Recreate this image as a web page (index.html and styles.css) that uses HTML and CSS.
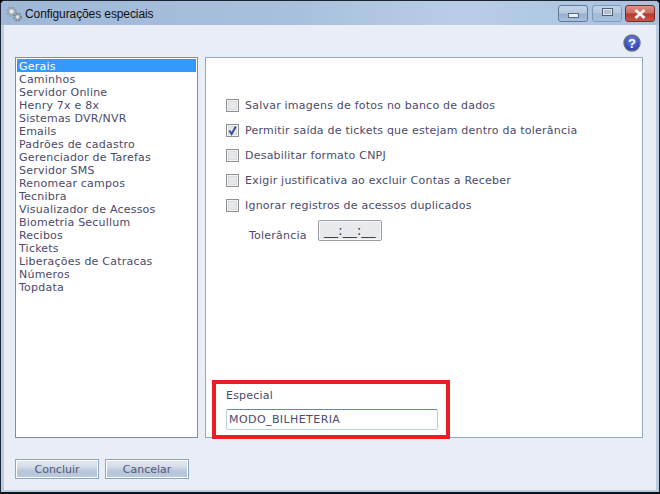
FILE: index.html
```html
<!DOCTYPE html>
<html lang="pt">
<head>
<meta charset="utf-8">
<title>Configurações especiais</title>
<link rel="stylesheet" href="styles.css">
</head>
<body>
<div class="window">
  <header class="titlebar">
    <svg class="app-icon" width="18" height="18" viewBox="0 0 18 18">
      <circle cx="6.5" cy="6.5" r="4" fill="none" stroke="#9a9ea6" stroke-width="2.4" stroke-dasharray="2 1.1"/>
      <circle cx="6.5" cy="6.5" r="2" fill="#e6e9ed"/>
      <circle cx="12.5" cy="12" r="3.4" fill="none" stroke="#80858e" stroke-width="2.2" stroke-dasharray="1.8 1"/>
      <circle cx="12.5" cy="12" r="1.4" fill="#e4e7eb"/>
    </svg>
    <span class="title">Configurações especiais</span>
    <div class="controls">
      <div class="ctl ctl-min"><span class="min-glyph"></span></div>
      <div class="ctl ctl-max"><span class="max-glyph"></span></div>
      <div class="ctl ctl-close">
        <svg width="20" height="12" viewBox="0 0 20 12"><path d="M5.5 2 L14.5 10 M14.5 2 L5.5 10" stroke="#eef0f2" stroke-width="3"/></svg>
      </div>
    </div>
  </header>
  <div class="content">
    <div class="help-row">
      <svg width="18" height="18" viewBox="0 0 18 18">
        <defs><radialGradient id="hb" cx="50%" cy="35%" r="70%"><stop offset="0" stop-color="#6f8cf0"/><stop offset="1" stop-color="#1c2fa8"/></radialGradient></defs>
        <circle cx="9" cy="9" r="8" fill="url(#hb)" stroke="#6b6f7c" stroke-width="1.4"/>
        <text x="9" y="13.5" class="help-q" text-anchor="middle">?</text>
      </svg>
    </div>
    <div class="main">
      <ul class="list">
        <li class="selected">Gerais</li>
        <li>Caminhos</li>
        <li>Servidor Online</li>
        <li>Henry 7x e 8x</li>
        <li>Sistemas DVR/NVR</li>
        <li>Emails</li>
        <li>Padrões de cadastro</li>
        <li>Gerenciador de Tarefas</li>
        <li>Servidor SMS</li>
        <li>Renomear campos</li>
        <li>Tecnibra</li>
        <li>Visualizador de Acessos</li>
        <li>Biometria Secullum</li>
        <li>Recibos</li>
        <li>Tickets</li>
        <li>Liberações de Catracas</li>
        <li>Números</li>
        <li>Topdata</li>
      </ul>
      <section class="panel">
        <div class="options">
          <div class="opt"><span class="check"></span>Salvar imagens de fotos no banco de dados</div>
          <div class="opt"><span class="check"><svg width="11" height="11" viewBox="0 0 11 11"><path d="M2.5 5.5 L4.6 9 L8.8 1.5" fill="none" stroke="#3c4fa0" stroke-width="2"/></svg></span>Permitir saída de tickets que estejam dentro da tolerância</div>
          <div class="opt"><span class="check"></span>Desabilitar formato CNPJ</div>
          <div class="opt"><span class="check"></span>Exigir justificativa ao excluir Contas a Receber</div>
          <div class="opt"><span class="check"></span>Ignorar registros de acessos duplicados</div>
        </div>
        <div class="tolerance">
          <span class="tolerance-label">Tolerância</span>
          <div class="time-field">__:__:__</div>
        </div>
        <div class="special">
          <label class="special-label">Especial</label>
          <div class="special-input">MODO_BILHETERIA</div>
        </div>
        <div class="highlight"></div>
      </section>
    </div>
    <footer class="actions">
      <button class="btn">Concluir</button>
      <button class="btn">Cancelar</button>
    </footer>
  </div>
</div>
</body>
</html>
```
FILE: styles.css
```css
* { box-sizing: border-box; }
html, body { margin: 0; padding: 0; background: #000; }
body { width: 660px; height: 494px; overflow: hidden; }
.window {
  width: 660px; height: 494px;
  display: flex; flex-direction: column;
  border: 1px solid #1c2430;
  border-right-color: #222; border-bottom: 2px solid #111;
  border-radius: 5px 5px 0 0;
  background: #b9cde4;
  font-family: "DejaVu Sans", Verdana, sans-serif;
  font-size: 11px;
  letter-spacing: 0.22px;
  color: #4a4a6a;
}
.titlebar {
  height: 24px; flex: none;
  display: flex; align-items: center;
  padding-left: 4px;
  background: linear-gradient(90deg, #9fb8d8 0%, #a9c0dc 45%, #b9cee6 70%, #a7c0de 100%);
  border-radius: 4px 4px 0 0;
}
.app-icon { flex: none; margin-top: 1px; }
.title {
  margin: 1px 0 0 2px;
  font-family: "Liberation Sans", Arial, sans-serif;
  font-size: 12px; color: #111;
  letter-spacing: -0.1px;
}
.controls { margin-left: auto; margin-right: 4px; display: flex; gap: 3px; align-self: flex-start; margin-top: 4px; }
.ctl {
  width: 30px; height: 17px; display: flex; align-items: center; justify-content: center;
  border: 1px solid #5f7a99; border-radius: 3px;
  background: linear-gradient(#c4d5e8 0%, #b3c8df 48%, #94afcc 52%, #a9c2dc 100%);
}
.ctl-min { margin-right: 1px; }
.ctl-max { border-color: #7f9ab8; background: linear-gradient(#c0d2e6 0%, #b2c7de 48%, #a0b9d3 52%, #aac2db 100%); }
.ctl-close { border-color: #7c2a22; background: linear-gradient(#dd9288 0%, #cd6a5e 48%, #b23a2c 52%, #c4574a 100%); }
.min-glyph { width: 11px; height: 5px; margin-top: 3px; background: #eef1f4; border: 1px solid #5a6a80; }
.max-glyph { width: 11px; height: 8px; margin-top: -3px; background: #b0c0d2; border: 1px solid #4f5f75; display: block; box-shadow: inset 0 0 0 1px #dfe4ea; }
.content {
  flex: 1; display: flex; flex-direction: column;
  margin: 0 3px 2px 3px;
  background: #e9eef6;
  padding: 0 13px 0 11px;
}
.help-row { height: 32px; display: flex; justify-content: flex-end; align-items: flex-end; padding-bottom: 5px; margin-right: 2px; }
.help-q { font-family: "Liberation Sans", Arial, sans-serif; font-weight: bold; font-size: 13px; fill: #fff; }
.main { display: flex; gap: 7px; height: 381px; flex: none; }
.list {
  width: 183px; margin: 0; padding: 1px;
  list-style: none;
  background: #fff;
  border: 1px solid #858c99;
}
.list li { height: 13px; line-height: 15px; padding-left: 2px; color: #4a4a6a; }
.list li.selected { background: #3399ff; color: #fff; }
.panel {
  position: relative;
  flex: 1;
  background: #fff;
  border: 1px solid #92a7c0;
  padding: 41px 0 0 20px;
  display: flex; flex-direction: column;
}
.options { display: flex; flex-direction: column; gap: 12px; }
.opt { height: 13px; line-height: 13px; display: flex; align-items: center; gap: 6px; white-space: nowrap; }
.check {
  width: 13px; height: 13px; flex: none;
  border: 1px solid #8e8f8f;
  background: #e6e8ec;
  box-shadow: inset 0 0 0 1px #f4f4f4, inset 0 0 0 2px #d8dbe0;
  display: flex; align-items: center; justify-content: center;
}
.tolerance { display: flex; align-items: flex-start; gap: 11px; margin: 8px 0 0 23px; }
.tolerance-label { margin-top: 9px; line-height: 13px; }
.time-field {
  width: 64px; height: 21px; line-height: 18px; text-align: center;
  background: #e7e9ec; border: 1px solid #9a9fa6; border-radius: 2px;
  box-shadow: inset 0 0 0 1px #f6f7f8;
  color: #444;
  font-size: 14px;
  letter-spacing: 0;
}
.special { margin-top: auto; padding: 0 0 7px 0; display: flex; flex-direction: column; gap: 7px; }
.special-label { line-height: 13px; }
.special-input {
  width: 212px; height: 21px; line-height: 19px; padding-left: 2px;
  background: #fff;
  border: 1px solid #b7cfe2; border-top-color: #5f88ad; border-radius: 2px;
  color: #4a4a72;
  letter-spacing: 0.42px;
}
.highlight {
  position: absolute; left: 6px; bottom: -2px;
  width: 238px; height: 59px;
  border: 4px solid #ee1c25;
}
.actions { display: flex; gap: 6px; margin-top: 21px; }
.btn {
  width: 84px; height: 20px; padding: 0;
  font: 11px "DejaVu Sans", Verdana, sans-serif;
  color: #55597a;
  border: 1px solid #8aa6c6;
  box-shadow: inset 0 0 0 1px #fff;
  background: linear-gradient(#e4e9f1 0%, #d6deea 35%, #b6c5d9 65%, #bccadd 100%);
}
```
